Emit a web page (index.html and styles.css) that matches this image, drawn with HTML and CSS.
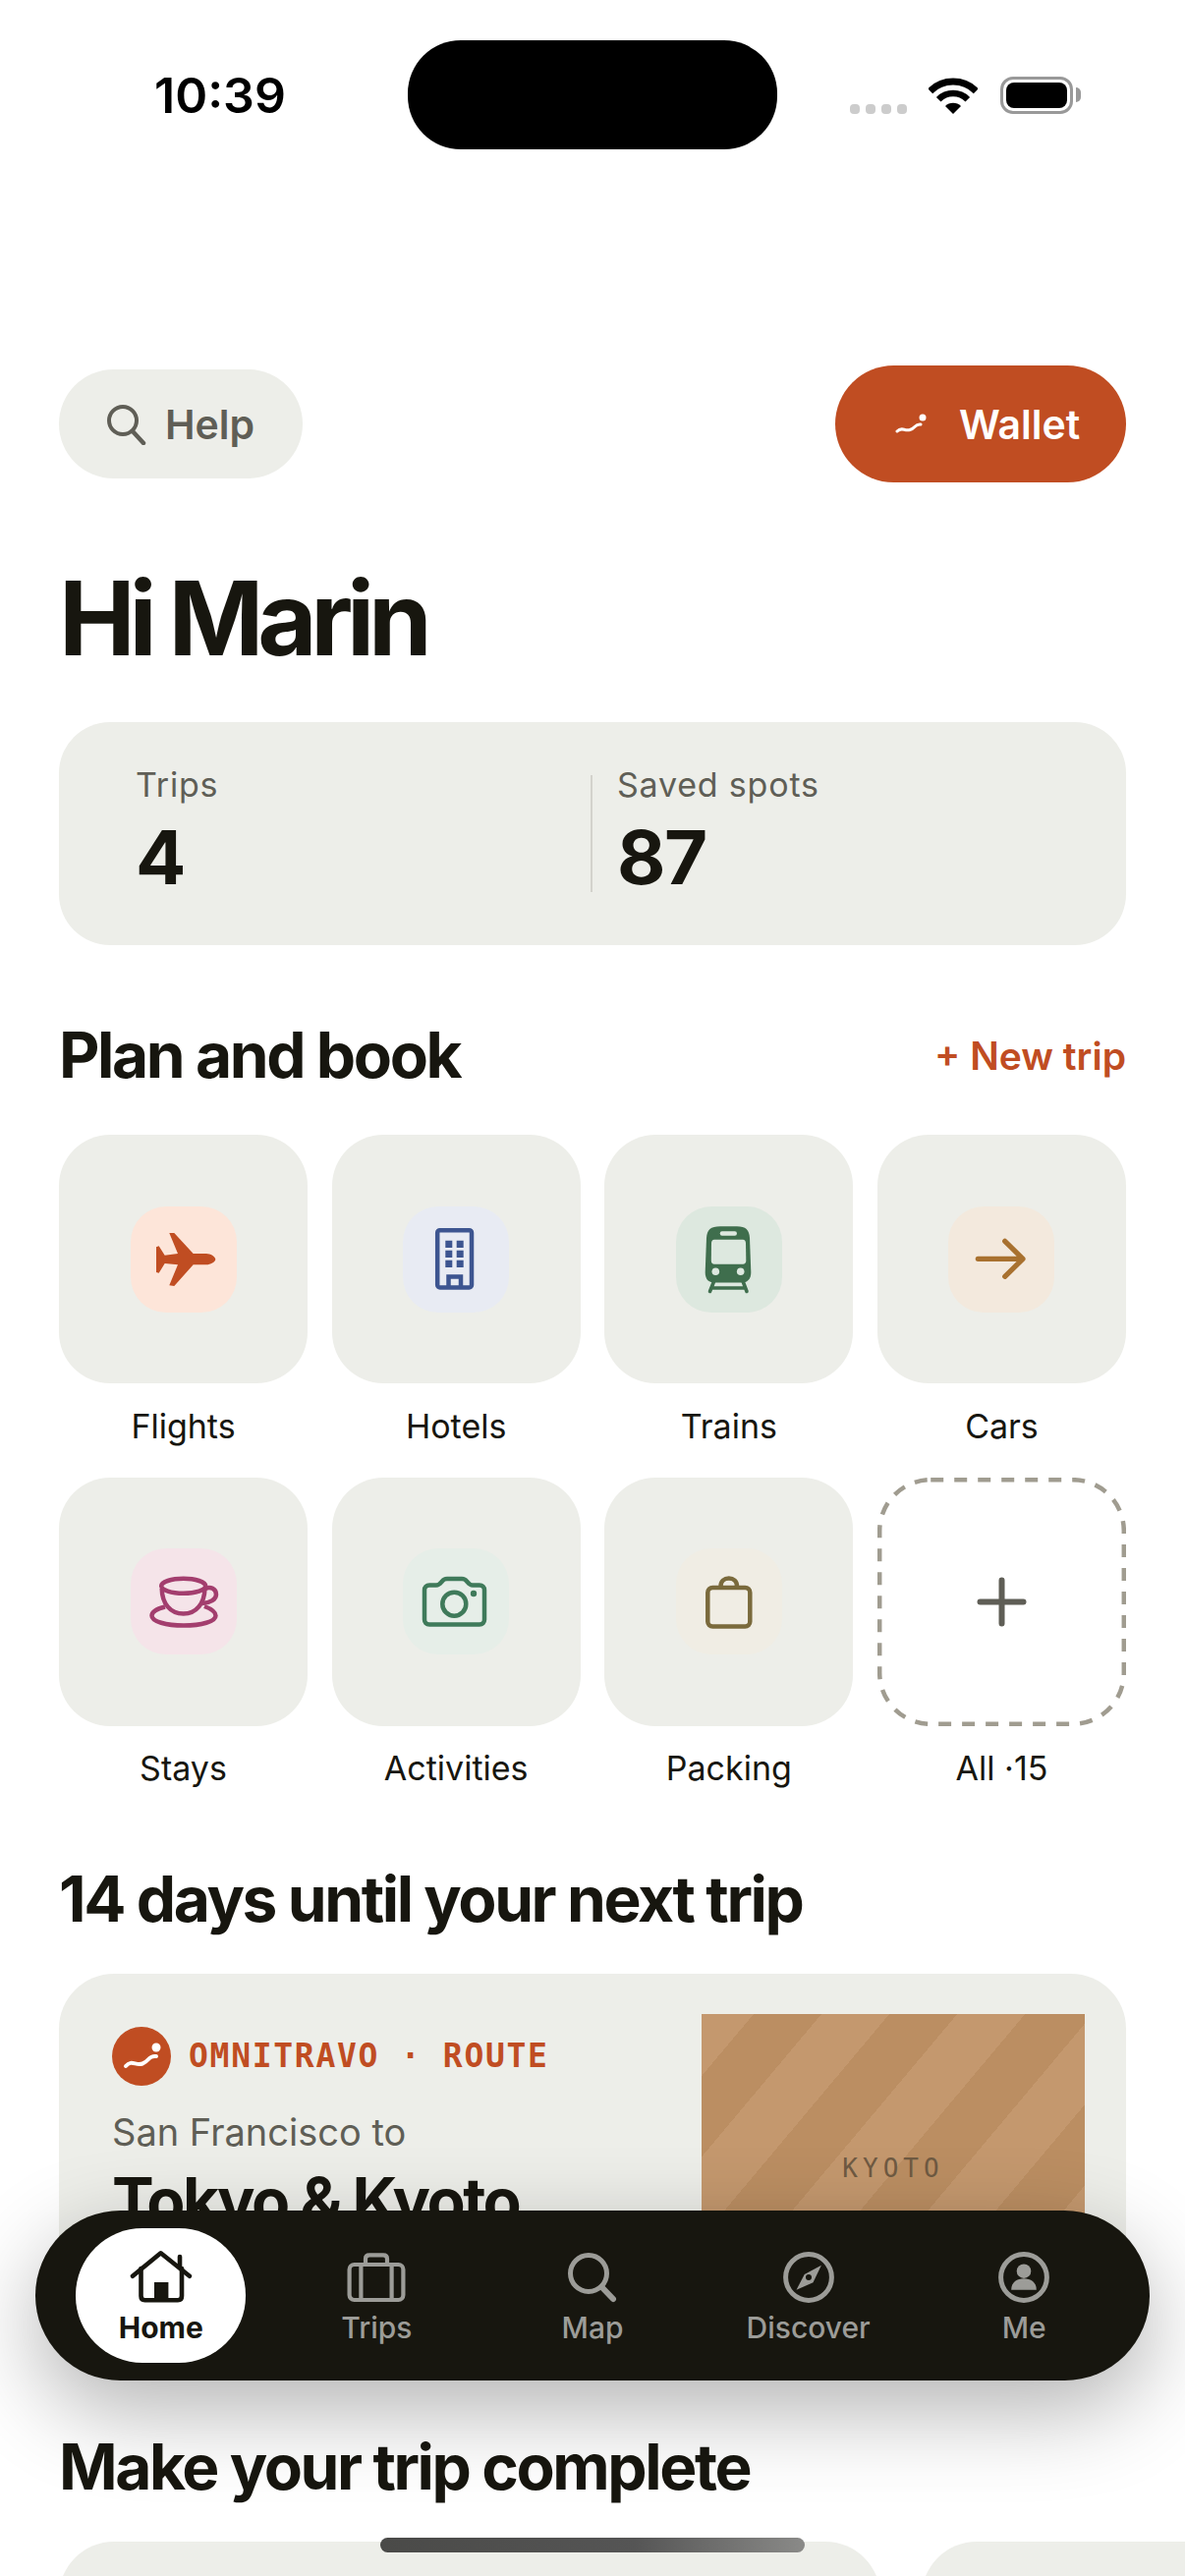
FILE: index.html
```html
<!DOCTYPE html>
<html lang="en">
<head>
    <meta charset="UTF-8">
    <meta name="viewport" content="width=device-width, initial-scale=1.0">
    <title>Omnitravo Home</title>
    <link rel="stylesheet" href="styles.css">
</head>
<body>
    <div class="screen">
        <div class="status-bar">
            <span class="time">10:39</span>
            <div class="island"></div>
            <div class="status-icons">
                <div class="signal"><i></i><i></i><i></i><i></i></div>
                <svg class="wifi" viewBox="0 0 50 37" width="50" height="37">
                    <path d="M1.7 13.7A33 33 0 0 1 48.3 13.7" fill="none" stroke="#000" stroke-width="7"/>
                    <path d="M10.2 22.2A21 21 0 0 1 39.8 22.2" fill="none" stroke="#000" stroke-width="6.5"/>
                    <path d="M25 37L17 29A11.3 11.3 0 0 1 33 29Z" fill="#000"/>
                </svg>
                <div class="battery"><div class="battery-level"></div></div>
            </div>
        </div>

        <main class="content">
            <div class="toolbar">
                <button class="help">
                    <svg viewBox="0 0 42 42" width="42" height="42">
                        <circle cx="18" cy="17" r="14" fill="none" stroke="#5f5e56" stroke-width="4"/>
                        <path d="M28 28L39 40" fill="none" stroke="#5f5e56" stroke-width="4.5" stroke-linecap="round"/>
                    </svg>
                    Help
                </button>
                <button class="wallet">
                    <svg viewBox="0 0 34 26" width="34" height="26">
                        <path d="M2 20C7 15 9 20 15 18.500C21 17 20 12 26 13" fill="none" stroke="#fff" stroke-width="3" stroke-linecap="round"/>
                        <circle cx="28" cy="6" r="3.500" fill="#fff"/>
                    </svg>
                    Wallet
                </button>
            </div>

            <h1 class="greeting">Hi Marin</h1>

            <div class="stats">
                <div class="stat stat-first">
                    <div class="stat-label">Trips</div>
                    <div class="stat-value">4</div>
                </div>
                <div class="stat-divider"></div>
                <div class="stat">
                    <div class="stat-label">Saved spots</div>
                    <div class="stat-value">87</div>
                </div>
            </div>

            <div class="section-head">
                <h2>Plan and book</h2>
                <span class="new-trip">+ New trip</span>
            </div>

            <div class="services">
                <div class="service">
                    <div class="service-card">
                        <div class="tile tile-flights">
                            <svg viewBox="0 0 108 108"><path d="M86.300 53.700C86.300 56.500 81 59.300 77 59.300L63.700 59.300L44.300 81L39.300 80.300L48 59.300L34.700 58L28.700 67.700L26 67L26 41.300L28.700 40.300L34.700 49.700L48 48L39.300 27L44.300 27L63.700 48L77 48C81 48 86.300 50.900 86.300 53.700Z" fill="#c04d22"/></svg>
                        </div>
                    </div>
                    <span class="service-name">Flights</span>
                </div>
                <div class="service">
                    <div class="service-card">
                        <div class="tile tile-hotels">
                            <svg viewBox="0 0 108 108">
                                <rect x="35.200" y="24.200" width="34.800" height="58.300" rx="2.500" fill="none" stroke="#3d5590" stroke-width="4.500"/>
                                <path d="M43.300 34.700h7v7.300h-7zM54.700 34.700h7v7.300h-7zM43.300 44.700h7v7.300h-7zM54.700 44.700h7v7.300h-7zM43.300 54.700h7v7.300h-7zM54.700 54.700h7v7.300h-7z" fill="#3d5590"/>
                                <path d="M46.500 82V71.500H59V82" fill="none" stroke="#3d5590" stroke-width="4.500"/>
                            </svg>
                        </div>
                    </div>
                    <span class="service-name">Hotels</span>
                </div>
                <div class="service">
                    <div class="service-card">
                        <div class="tile tile-trains">
                            <svg viewBox="0 0 108 108">
                                <path d="M45 20.300H62C71 20.300 74.500 24 75 32L76.300 67C76.300 74 73 77.500 67 77.500H39C33 77.500 29.700 74 29.700 67L31 32C31.500 24 35 20.300 45 20.300Z" fill="#3f6e4d"/>
                                <path d="M39 33.700H68C70 33.700 70.800 35 71 37L71.300 55C71.300 57.500 70 58.700 68 58.700H39C37 58.700 35.800 57.500 35.800 55L36 37C36.200 35 37 33.700 39 33.700Z" fill="#dde8df"/>
                                <rect x="44.700" y="25.300" width="17.300" height="4.400" rx="2.200" fill="#dde8df"/>
                                <circle cx="40.300" cy="66.300" r="3.800" fill="#dde8df"/>
                                <circle cx="65.700" cy="66.300" r="3.800" fill="#dde8df"/>
                                <path d="M38.700 76L34.500 86.500M68 76L72 86.500M36.500 83H70" fill="none" stroke="#3f6e4d" stroke-width="3.600" stroke-linecap="round"/>
                            </svg>
                        </div>
                    </div>
                    <span class="service-name">Trains</span>
                </div>
                <div class="service">
                    <div class="service-card">
                        <div class="tile tile-cars">
                            <svg viewBox="0 0 108 108"><path d="M30.300 53.300H76M57.700 35.300L76 53.300L57.700 71.300" fill="none" stroke="#a8712f" stroke-width="5.200" stroke-linecap="round" stroke-linejoin="round"/></svg>
                        </div>
                    </div>
                    <span class="service-name">Cars</span>
                </div>
                <div class="service">
                    <div class="service-card">
                        <div class="tile tile-stays">
                            <svg viewBox="0 0 108 108" fill="none" stroke="#a33e6e" stroke-width="4.500">
                                <ellipse cx="53.700" cy="38.300" rx="22.500" ry="7.500"/>
                                <path d="M31.700 41C32 56 40 66.500 53.700 66.500C67 66.500 75 56 75.500 41"/>
                                <path d="M76 41C81 38.500 87 41 87 47C87 52 81 55.500 73 56"/>
                                <path d="M35 59.500C25 62 21.500 65 21.500 68.500C21.500 74.500 36 78.500 54 78.500C72 78.500 86.500 74.500 86.500 68.500C86.500 65 83 62 75 59"/>
                            </svg>
                        </div>
                    </div>
                    <span class="service-name">Stays</span>
                </div>
                <div class="service">
                    <div class="service-card">
                        <div class="tile tile-activities">
                            <svg viewBox="0 0 108 108">
                                <path d="M27 37.500H34C37 37.500 38 36 40 33.500C41 32 42.500 31 45 31H60C62.500 31 64 32 65 33.500C67 36 68 37.500 71 37.500H78C81 37.500 83 39.500 83 42.500V72.500C83 75.500 81 77.500 78 77.500H27C24 77.500 22 75.500 22 72.500V42.500C22 39.500 24 37.500 27 37.500Z" fill="none" stroke="#3f7a5a" stroke-width="4.500"/>
                                <circle cx="52.300" cy="56.700" r="12" fill="none" stroke="#3f7a5a" stroke-width="4.500"/>
                                <circle cx="72" cy="46" r="3.200" fill="#3f7a5a"/>
                            </svg>
                        </div>
                    </div>
                    <span class="service-name">Activities</span>
                </div>
                <div class="service">
                    <div class="service-card">
                        <div class="tile tile-packing">
                            <svg viewBox="0 0 108 108" fill="none" stroke="#7a6a3c" stroke-width="4.500">
                                <rect x="32.300" y="40" width="43" height="39.500" rx="5"/>
                                <path d="M45.500 40V38.500C45.500 33.500 49 30.500 53.800 30.500C58.500 30.500 62 33.500 62 38.500V40"/>
                            </svg>
                        </div>
                    </div>
                    <span class="service-name">Packing</span>
                </div>
                <div class="service">
                    <svg class="all-card" viewBox="0 0 253 253">
                        <rect x="2.200" y="2.200" width="248.600" height="248.600" rx="52" fill="none" stroke="#a09c90" stroke-width="4.500" stroke-dasharray="13 11"/>
                        <path d="M104.500 126.500H148.500M126.500 104.500V148.500" fill="none" stroke="#5f5e56" stroke-width="6" stroke-linecap="round"/>
                    </svg>
                    <span class="service-name">All ·15</span>
                </div>
            </div>

            <h2 class="countdown">14 days until your next trip</h2>

            <div class="trip-card">
                <div class="trip-info">
                    <div class="trip-brand">
                        <div class="brand-logo">
                            <svg viewBox="0 0 60 60" width="60" height="60">
                                <path d="M14 40C20 33 24 40 31 37.500C38 35 37 29 45 30" fill="none" stroke="#fff" stroke-width="4" stroke-linecap="round"/>
                                <circle cx="45" cy="21" r="4.500" fill="#fff"/>
                            </svg>
                        </div>
                        <span class="brand-name">OMNITRAVO · ROUTE</span>
                    </div>
                    <div class="trip-from">San Francisco to</div>
                    <div class="trip-to">Tokyo &amp; Kyoto</div>
                </div>
                <div class="trip-image"><span>KYOTO</span></div>
            </div>

            <h2 class="complete">Make your trip complete</h2>

            <div class="extras">
                <div class="extra-card"></div>
                <div class="extra-card"></div>
            </div>
        </main>

        <nav class="tab-bar">
            <div class="tab active">
                <svg viewBox="0 0 64 56" width="64" height="56" fill="none" stroke="#17160f" stroke-width="4.600" stroke-linecap="round" stroke-linejoin="round">
                    <path d="M3 26.700L31.600 3.300L60.900 26.700"/>
                    <path d="M51 7V17"/>
                    <path d="M11.500 19V47C11.500 50 13 51.200 15.500 51.200H49C51.500 51.200 53 50 53 47V19"/>
                    <path d="M25 33H39.400V50H25Z" fill="#17160f" stroke="none"/>
                </svg>
                <span>Home</span>
            </div>
            <div class="tab">
                <svg viewBox="0 0 64 56" width="64" height="56" fill="none" stroke="#9c9c98" stroke-width="4.200">
                    <rect x="4.600" y="15" width="54.800" height="36" rx="5"/>
                    <path d="M16.400 15V51M47.600 15V51"/>
                    <path d="M21 15V9C21 6.500 22.500 5.400 25 5.400H39C41.500 5.400 43 6.500 43 9V15"/>
                </svg>
                <span>Trips</span>
            </div>
            <div class="tab">
                <svg viewBox="0 0 64 56" width="64" height="56" fill="none" stroke="#9c9c98">
                    <circle cx="28" cy="24" r="18.500" stroke-width="5"/>
                    <path d="M41.500 38L53 50" stroke-width="6" stroke-linecap="round"/>
                </svg>
                <span>Map</span>
            </div>
            <div class="tab">
                <svg viewBox="0 0 64 56" width="64" height="56">
                    <circle cx="32" cy="28" r="23.400" fill="none" stroke="#9c9c98" stroke-width="5"/>
                    <path d="M44.900 15.700L36.500 33.300L19.500 40.700L27.700 25Z" fill="#9c9c98"/>
                    <circle cx="32" cy="28" r="3" fill="#17160f"/>
                </svg>
                <span>Discover</span>
            </div>
            <div class="tab">
                <svg viewBox="0 0 64 56" width="64" height="56">
                    <circle cx="32" cy="28" r="23.400" fill="none" stroke="#9c9c98" stroke-width="5"/>
                    <circle cx="32" cy="21.700" r="7.300" fill="#9c9c98"/>
                    <path d="M19.200 40.700C19.200 33 25 29.300 32 29.300C39 29.300 44.800 33 44.800 40.700Z" fill="#9c9c98"/>
                </svg>
                <span>Me</span>
            </div>
        </nav>

        <div class="home-indicator"></div>
    </div>
</body>
</html>
```

FILE: styles.css
```css
* {
    box-sizing: border-box;
}
body {
    margin: 0;
    background: #fff;
    font-family: Inter, "Noto Sans", sans-serif;
    color: #17160f;
}
.screen {
    position: relative;
    width: 1206px;
    height: 2622px;
    overflow: hidden;
}

/* status bar */
.status-bar {
    display: flex;
    justify-content: space-between;
    height: 372px;
    padding: 41px 0 0 157px;
}
.time {
    width: 258px;
    padding-top: 32px;
    font-size: 50px;
    line-height: 48px;
    font-weight: 600;
    color: #000;
}
.island {
    width: 376px;
    height: 111px;
    background: #000;
    border-radius: 54px;
}
.status-icons {
    display: flex;
    flex: 1;
    align-items: flex-end;
    height: 75px;
    padding-left: 74px;
}
.signal {
    display: flex;
    gap: 6px;
    margin-right: 22px;
}
.signal i {
    width: 10px;
    height: 10px;
    background: #ccc;
    border-radius: 4px;
}
.wifi {
    margin-right: 23px;
}
.battery {
    position: relative;
    width: 74px;
    height: 38px;
    padding: 3px;
    border: 3px solid #999;
    border-radius: 13px;
}
.battery::after {
    content: "";
    position: absolute;
    top: 8px;
    right: -11px;
    width: 5px;
    height: 15px;
    background: #999;
    border-radius: 0 8px 8px 0;
}
.battery-level {
    height: 100%;
    background: #000;
    border-radius: 8px;
}

.content {
    padding: 0 60px;
}

/* top buttons */
.toolbar {
    display: flex;
    justify-content: space-between;
    align-items: center;
    height: 119px;
}
.toolbar button {
    display: flex;
    align-items: center;
    border: none;
    font-family: inherit;
    font-size: 41px;
}
.help {
    gap: 19px;
    width: 248px;
    height: 111px;
    padding: 0 0 0 47px;
    background: #edeee9;
    border-radius: 56px;
    color: #5f5e56;
    font-weight: 600;
}
.wallet {
    gap: 31px;
    width: 296px;
    height: 119px;
    padding: 0 0 0 61px;
    background: #c04d22;
    border-radius: 60px;
    color: #fff;
    font-weight: 600;
}

.greeting {
    margin: 76px 0 44px;
    font-size: 104px;
    line-height: 124px;
    font-weight: 700;
    letter-spacing: -6.300px;
}

/* stats */
.stats {
    display: flex;
    align-items: flex-start;
    height: 227px;
    padding: 44px 80px 0 78px;
    background: #edeee9;
    border-radius: 52px;
}
.stat-first {
    width: 463px;
}
.stat-divider {
    width: 2px;
    height: 119px;
    margin: 10px 25px 0 0;
    background: #d3d2cc;
}
.stat-label {
    font-size: 34px;
    line-height: 40px;
    letter-spacing: 0.800px;
    color: #5f5e56;
}
.stat-value {
    margin-top: 15px;
    font-size: 76px;
    line-height: 76px;
    font-weight: 700;
    letter-spacing: -1.500px;
}

h2 {
    margin: 0;
    font-size: 64px;
    line-height: 76px;
    font-weight: 700;
    letter-spacing: -2.400px;
}
.section-head {
    display: flex;
    justify-content: space-between;
    align-items: center;
    margin: 74px 0 43px;
}
.new-trip {
    font-size: 39px;
    font-weight: 600;
    color: #c04d22;
}

/* services grid */
.services {
    display: grid;
    grid-template-columns: repeat(4, 1fr);
    column-gap: 24.670px;
    row-gap: 32px;
}
.service {
    display: flex;
    flex-direction: column;
    align-items: center;
}
.service-card {
    display: flex;
    align-items: center;
    justify-content: center;
    width: 100%;
    height: 253px;
    background: #edeee9;
    border-radius: 52px;
}
.all-card {
    display: block;
    width: 100%;
    height: 253px;
}
.service-name {
    margin-top: 23.500px;
    font-size: 34px;
    line-height: 40px;
}
.tile {
    width: 108px;
    height: 108px;
    border-radius: 36px;
}
.tile svg {
    display: block;
    width: 108px;
    height: 108px;
}
.tile-flights { background: #fde5d9; }
.tile-hotels { background: #e8ebf3; }
.tile-trains { background: #dde8df; }
.tile-cars { background: #f3e9dd; }
.tile-stays { background: #f5e4e9; }
.tile-activities { background: #e6eee8; }
.tile-packing { background: #f0ede4; }

.countdown {
    margin: 74.500px 0 38px;
}

/* next trip */
.trip-card {
    display: flex;
    justify-content: space-between;
    height: 380px;
    padding: 41px 42px 0 54px;
    background: #edeee9;
    border-radius: 56px;
}
.trip-info {
    padding-top: 13px;
}
.trip-brand {
    display: flex;
    align-items: center;
    gap: 18px;
}
.brand-logo {
    width: 60px;
    height: 60px;
    background: #c04d22;
    border-radius: 50%;
}
.brand-logo svg {
    display: block;
}
.brand-name {
    font-family: "DejaVu Sans Mono", "Liberation Mono", monospace;
    font-size: 33px;
    font-weight: 700;
    letter-spacing: 1.700px;
    color: #c04d22;
}
.trip-from {
    margin-top: 24px;
    font-size: 38px;
    line-height: 46px;
    color: #5f5e56;
}
.trip-to {
    margin-top: 9px;
    font-size: 64px;
    line-height: 76px;
    font-weight: 700;
    letter-spacing: -2.500px;
}
.trip-image {
    display: flex;
    align-items: flex-start;
    justify-content: center;
    width: 390px;
    height: 300px;
    padding-top: 137px;
    background: repeating-linear-gradient(130deg, #c4986e 0 40.600px, #bb8e62 40.600px 93.500px, #c4986e 93.500px 105.800px);
}
.trip-image span {
    font-family: "DejaVu Sans Mono", "Liberation Mono", monospace;
    font-size: 26px;
    line-height: 40px;
    letter-spacing: 5px;
    color: #6f5a42;
}

.complete {
    margin: 84px 0 38px;
}
.extras {
    display: flex;
    gap: 42px;
}
.extra-card {
    flex: 0 0 836px;
    height: 200px;
    background: #edeee9;
    border-radius: 56px;
}

/* tab bar floats over the page */
.tab-bar {
    position: absolute;
    top: 2250px;
    left: 36px;
    display: grid;
    grid-template-columns: repeat(5, 1fr);
    justify-items: center;
    align-items: center;
    width: 1134px;
    height: 173px;
    padding: 0 18px;
    background: #17160f;
    border-radius: 87px;
    box-shadow: 0 30px 90px rgba(0, 0, 0, 0.3);
}
.tab {
    display: flex;
    flex-direction: column;
    align-items: center;
    justify-content: flex-start;
    width: 173px;
    height: 137px;
    padding-top: 22px;
    border-radius: 68px;
    font-size: 30px;
    line-height: 36px;
    font-weight: 500;
    color: #9c9c98;
}
.tab svg {
    display: block;
    margin-bottom: 5px;
}
.tab.active {
    background: #fff;
    color: #17160f;
    font-weight: 700;
}
.home-indicator {
    position: absolute;
    top: 2583px;
    left: 387px;
    width: 432px;
    height: 15px;
    background: linear-gradient(90deg, #4a4a48, #555 60%, #8a8a88);
    border-radius: 8px;
}
```
